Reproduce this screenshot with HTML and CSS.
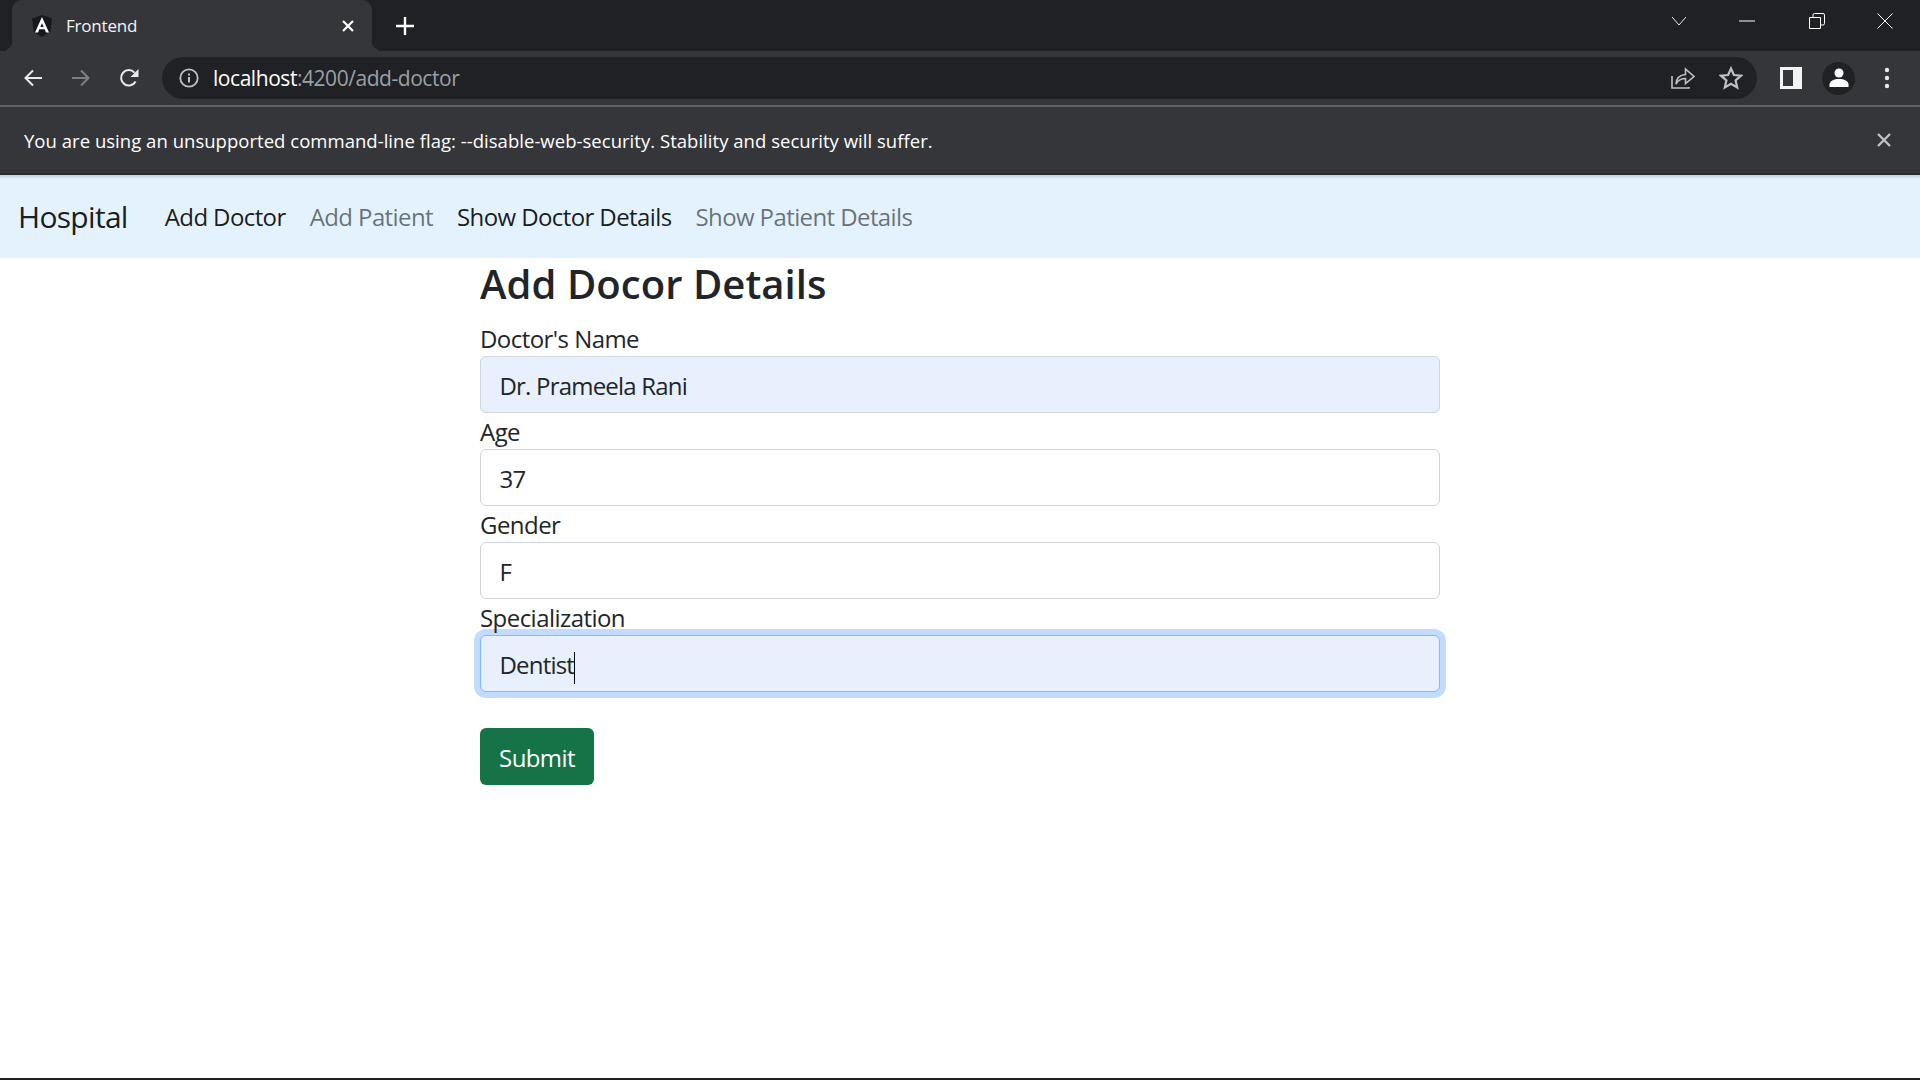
FILE: index.html
```html
<!DOCTYPE html>
<html lang="en">

<head>
    <meta charset="UTF-8">
    <title>Frontend</title>
    <link rel="stylesheet" href="styles.css">
</head>

<body>
    <div class="tab-strip">
        <div class="tab">
            <svg class="favicon" viewBox="0 0 24 24" width="24" height="24">
                <path d="M12 1 2 4.600l1.600 13.200L12 23l8.400-5.200L22 4.600z" fill="#16181d"/>
                <path d="M12 3 5 18.500h3l1.300-3.300h5.400l1.300 3.300h3zm0 6.200 1.700 3.800h-3.400z" fill="#fff" fill-rule="evenodd"/>
            </svg>
            <span class="tab-title">Frontend</span>
            <svg class="tab-close" viewBox="0 0 14 14" width="14" height="14">
                <path d="M2 2l10 10M12 2 2 12" stroke="#fff" stroke-width="2.200" fill="none"/>
            </svg>
        </div>
        <svg class="new-tab" viewBox="0 0 18 18" width="18" height="18">
            <path d="M9 0v18M0 9h18" stroke="#fff" stroke-width="2.400" fill="none"/>
        </svg>
        <div class="window-btns">
            <svg class="tab-search" viewBox="0 0 16 10" width="16" height="10">
                <path d="M1 1l7 8 7-8" stroke="#e8eaed" stroke-width="1" fill="none"/>
            </svg>
            <svg class="win-min" viewBox="0 0 16 2" width="16" height="2">
                <path d="M0 1h16" stroke="#fff" stroke-width="1"/>
            </svg>
            <svg class="win-restore" viewBox="0 0 16 16" width="16" height="16">
                <path d="M.5 4.500h11v11H.5zM4 4.500V2A1.500 1.500 0 0 1 5.500.5H14A1.500 1.500 0 0 1 15.500 2v8.500A1.500 1.500 0 0 1 14 12h-2.500" stroke="#fff" stroke-width="1" fill="none"/>
            </svg>
            <svg class="win-close" viewBox="0 0 16 16" width="16" height="16">
                <path d="M.5.500l15 15M15.500.500l-15 15" stroke="#fff" stroke-width="1" fill="none"/>
            </svg>
        </div>
    </div>

    <div class="toolbar">
        <svg class="tool-icon back" viewBox="0 0 20 20" width="20" height="20">
            <path d="M19 10H3M10 2.500 2.500 10l7.500 7.500" stroke="#e8eaed" stroke-width="2" fill="none"/>
        </svg>
        <svg class="tool-icon forward" viewBox="0 0 20 20" width="20" height="20">
            <path d="M1 10h16M10 2.500l7.500 7.500-7.500 7.500" stroke="#7d7f83" stroke-width="2" fill="none"/>
        </svg>
        <svg class="tool-icon reload" viewBox="0 0 20 20" width="20" height="20">
            <path d="M16.600 13.500A7.700 7.700 0 1 1 15.500 4.600" stroke="#e8eaed" stroke-width="2" fill="none"/>
            <path d="M19.500 1v8h-8z" fill="#e8eaed"/>
        </svg>
        <div class="omnibox">
            <svg class="info-icon" viewBox="0 0 20 20" width="20" height="20">
                <circle cx="10" cy="10" r="8.700" stroke="#bdc1c6" stroke-width="1.800" fill="none"/>
                <path d="M9 9h2v5.500H9zM9 5.500h2v2H9z" fill="#bdc1c6"/>
            </svg>
            <span class="url"><span class="url-host">localhost</span>:4200/add-doctor</span>
            <svg class="share-icon" viewBox="0 0 24 22" width="24" height="22">
                <path d="M1 9v12h17v-1" stroke="#bdc1c6" stroke-width="1.600" fill="none"/>
                <path d="M5 17c.3-5.500 4-9 9.500-9.500V2l8.500 7.500-8.500 7v-5C10 11.500 7 13.500 5 17z" stroke="#bdc1c6" stroke-width="1.600" fill="none"/>
            </svg>
            <svg class="star-icon" viewBox="0 0 24 24" width="24" height="24">
                <path d="M12 2.500l2.900 6.500 7.100.7-5.400 4.700 1.600 7-6.200-3.700-6.200 3.700 1.600-7L2 9.700 9.100 9z" stroke="#bdc1c6" stroke-width="2.200" fill="none"/>
            </svg>
        </div>
        <svg class="sidebar-icon" viewBox="0 0 22 22" width="22" height="22">
            <path d="M0 0h22v22H0z" fill="#f1f3f4"/>
            <path d="M3 3h10v16H3z" fill="#35363a"/>
        </svg>
        <div class="profile">
            <svg viewBox="0 0 20 20" width="20" height="20">
                <circle cx="10" cy="5" r="4.500" fill="#fff"/>
                <path d="M.5 19v-2.500C.5 13 5 11 10 11s9.500 2 9.500 5.500V19z" fill="#fff"/>
            </svg>
        </div>
        <svg class="menu-icon" viewBox="0 0 6 22" width="6" height="22">
            <circle cx="3" cy="3" r="2.200" fill="#e8eaed"/>
            <circle cx="3" cy="11" r="2.200" fill="#e8eaed"/>
            <circle cx="3" cy="19" r="2.200" fill="#e8eaed"/>
        </svg>
    </div>

    <div class="infobar">
        <span>You are using an unsupported command-line flag: --disable-web-security. Stability and security will suffer.</span>
        <svg viewBox="0 0 14 14" width="14" height="14">
            <path d="M1 1l12 12M13 1 1 13" stroke="#bdc1c6" stroke-width="2.400" fill="none"/>
        </svg>
    </div>

    <nav class="navbar">
        <a class="brand">Hospital</a>
        <a class="nav-link active">Add Doctor</a>
        <a class="nav-link">Add Patient</a>
        <a class="nav-link active">Show Doctor Details</a>
        <a class="nav-link">Show Patient Details</a>
    </nav>

    <main class="container">
        <h2>Add Docor Details</h2>
        <form>
            <label for="docName">Doctor's Name</label>
            <input type="text" id="docName" class="autofilled" value="Dr. Prameela Rani">
            <label for="age">Age</label>
            <input type="text" id="age" value="37">
            <label for="gender">Gender</label>
            <input type="text" id="gender" value="F">
            <label for="spec">Specialization</label>
            <div class="input-focus">Dentist<span class="caret"></span></div>
            <button type="button">Submit</button>
        </form>
    </main>

    <div class="bottom-line"></div>
</body>

</html>
```

FILE: styles.css
```css
* {
    box-sizing: border-box;
}

html,
body {
    margin: 0;
    height: 1080px;
    overflow: hidden;
}

body {
    display: flex;
    flex-direction: column;
    background: #fff;
    font-family: 'Open Sans', sans-serif;
    color: #212529;
}

svg {
    flex: none;
    display: block;
}

/* browser chrome */
.tab-strip {
    display: flex;
    align-items: center;
    height: 51px;
    background: #202124;
}

.tab {
    display: flex;
    align-items: center;
    align-self: stretch;
    position: relative;
    width: 360px;
    margin-left: 12px;
    padding: 0 17px 0 18px;
    background: #35363a;
    border-radius: 10px 10px 0 0;
}

.tab::before,
.tab::after {
    content: "";
    position: absolute;
    bottom: 0;
    width: 10px;
    height: 10px;
    background: #202124;
}

.tab::before {
    left: -10px;
    border-bottom-right-radius: 10px;
    box-shadow: 4px 4px 0 #35363a;
}

.tab::after {
    right: -10px;
    border-bottom-left-radius: 10px;
    box-shadow: -4px 4px 0 #35363a;
}

.favicon {
    width: 24px;
    height: 24px;
}

.tab-title {
    margin-left: 12px;
    font-size: 17px;
    letter-spacing: -0.200px;
    color: #f1f3f4;
}

.tab-close {
    margin-left: auto;
}

.new-tab {
    margin-left: 24px;
}

.window-btns {
    display: flex;
    align-items: center;
    margin-left: auto;
    padding: 0 27px 10px 0;
}

.win-min {
    margin-left: 52px;
}

.win-restore {
    margin-left: 54px;
}

.win-close {
    margin-left: 52px;
}

.toolbar {
    display: flex;
    align-items: center;
    height: 56px;
    padding: 0 0 0 23px;
    background: #35363a;
    border-bottom: 2px solid #5f6165;
}

.forward {
    margin-left: 28px;
}

.reload {
    margin-left: 28px;
}

.omnibox {
    display: flex;
    align-items: center;
    width: 1595px;
    height: 42px;
    margin-left: 23px;
    padding: 0 14px 0 17px;
    background: #202124;
    border-radius: 21px;
}

.url {
    margin-left: 14px;
    font-size: 21px;
    letter-spacing: -0.450px;
    color: #9aa0a6;
}

.url-host {
    color: #fff;
}

.share-icon {
    margin-left: auto;
}

.star-icon {
    margin-left: 24px;
}

.sidebar-icon {
    margin-left: 23px;
}

.profile {
    display: flex;
    align-items: center;
    justify-content: center;
    width: 33px;
    height: 33px;
    margin-left: 20px;
    background: #202124;
    border-radius: 50%;
}

.menu-icon {
    margin-left: 29px;
}

.infobar {
    display: flex;
    align-items: center;
    justify-content: space-between;
    height: 68px;
    padding: 0 29px 0 24px;
    background: #35363a;
    border-bottom: 2px solid #2a2b2e;
    font-size: 18.500px;
    letter-spacing: 0.030px;
    color: #fff;
}

/* page */
.navbar {
    display: flex;
    align-items: center;
    height: 83px;
    padding-left: 18px;
    background: #e3f2fd;
    box-shadow: inset 0 4px 3px -2px rgba(0, 0, 0, .15);
    font-size: 24px;
}

.brand {
    margin-right: 37px;
    font-size: 30px;
    letter-spacing: -0.700px;
    color: rgba(0, 0, 0, .9);
}

.nav-link {
    margin-right: 24px;
    letter-spacing: -0.600px;
    color: rgba(0, 0, 0, .55);
}

.nav-link.active {
    color: rgba(0, 0, 0, .9);
}

.container {
    width: 960px;
    margin: 0 auto;
    flex: 1;
}

h2 {
    margin: 2px 0 12px;
    font-size: 40px;
    font-weight: 600;
    line-height: 48px;
    letter-spacing: 0.060px;
}

label {
    display: block;
    height: 36px;
    font-size: 24px;
    line-height: 38px;
    letter-spacing: -0.550px;
}

input,
.input-focus {
    display: block;
    width: 100%;
    height: 57px;
    padding: 2px 18.500px 0;
    border: 1.500px solid #ced4da;
    border-radius: 6px;
    background: #fff;
    font-family: inherit;
    font-size: 24px;
    letter-spacing: -0.800px;
    line-height: 52px;
    color: #212529;
}

.autofilled {
    background: #e8f0fe;
}

.input-focus {
    background: #e8f0fe;
    border-color: #86b7fe;
    box-shadow: 0 0 0 6px #c2dbfe;
    line-height: 53px;
}

.caret {
    display: inline-block;
    width: 1px;
    height: 32px;
    vertical-align: middle;
    background: #000;
}

button {
    display: block;
    width: 114px;
    height: 57px;
    margin-top: 36px;
    padding: 2px 0 0;
    border: 0;
    border-radius: 6px;
    background: #157347;
    font-family: inherit;
    font-size: 24px;
    letter-spacing: -0.600px;
    color: #fff;
}

.bottom-line {
    height: 2px;
    background: #202020;
}
```
